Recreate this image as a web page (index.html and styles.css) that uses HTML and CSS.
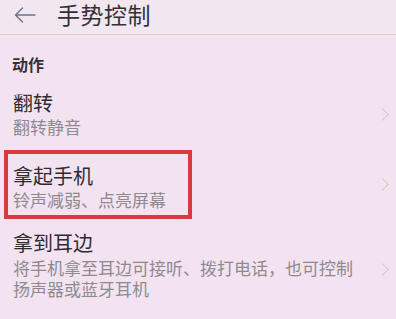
FILE: index.html
```html
<!DOCTYPE html>
<html lang="zh-CN">
<head>
<meta charset="utf-8">
<link rel="stylesheet" href="styles.css">
</head>
<body>
<div class="screen">
  <header class="topbar">
    <svg class="back" width="22" height="16" viewBox="0 0 22 16" fill="none" stroke="#6d7090" stroke-width="1.4" stroke-linecap="round" stroke-linejoin="round">
      <path d="M21 8H1.5M8.5 1L1.5 8l7 7"/>
    </svg>
    <h1 class="title">手势控制</h1>
  </header>
  <div class="section-label">动作</div>
  <div class="row row-first">
    <div class="text">
      <div class="item-title">翻转</div>
      <div class="item-sub">翻转静音</div>
    </div>
    <span class="chev"></span>
  </div>
  <div class="row row-mark">
    <div class="text highlight">
      <div class="item-title">拿起手机</div>
      <div class="item-sub">铃声减弱、点亮屏幕</div>
    </div>
    <span class="chev"></span>
  </div>
  <div class="row row-last">
    <div class="text wide">
      <div class="item-title">拿到耳边</div>
      <div class="item-sub">将手机拿至耳边可接听、拨打电话，也可控制扬声器或蓝牙耳机</div>
    </div>
    <span class="chev chev-low"></span>
  </div>
</div>
</body>
</html>
```
FILE: styles.css
```css
* { box-sizing: border-box; }
html, body { margin: 0; padding: 0; }
body {
  width: 396px;
  height: 319px;
  overflow: hidden;
  background: #f3e3f0;
  font-family: "Noto Sans CJK SC", "Noto Sans", sans-serif;
  color: #2e2b30;
}
.screen { width: 396px; height: 319px; }
.topbar {
  height: 35px;
  display: flex;
  align-items: center;
  border-bottom: 1px solid #d8ccd6;
  background: #f2e6f1;
  padding-left: 14px;
  padding-bottom: 6px;
}
.back { margin-top: 2px; flex: none; }
.title {
  margin: 0 0 0 21px;
  font-size: 23px;
  line-height: 28px;
  font-weight: 400;
  color: #333035;
  letter-spacing: 0.5px;
}
.section-label {
  margin: 19px 0 0 12px;
  font-size: 16px;
  line-height: 20px;
  font-weight: 700;
  color: #343136;
}
.row {
  display: flex;
  align-items: center;
  justify-content: space-between;
  padding-right: 9px;
}
.row-first { margin-top: 17px; padding-left: 13px; }
.row-mark { margin-top: 12px; padding-left: 4px; }
.row-last { margin-top: 12px; padding-left: 13px; }
.item-title {
  font-size: 20px;
  line-height: 24px;
  color: #2f2c31;
}
.item-sub {
  margin-top: 1px;
  font-size: 17px;
  line-height: 22px;
  color: #8d8a90;
}
.highlight {
  border: 4px solid #d93a3c;
  padding: 10px 22px 4px 5px;
}
.wide { width: 352px; }
.wide .item-sub { margin-top: 2px; line-height: 21px; }
.chev {
  width: 9px;
  height: 9px;
  border-top: 1.5px solid #cfc6d0;
  border-right: 1.5px solid #cfc6d0;
  transform: rotate(45deg);
  flex: none;
}
.chev-low { margin-top: 8px; }
```
